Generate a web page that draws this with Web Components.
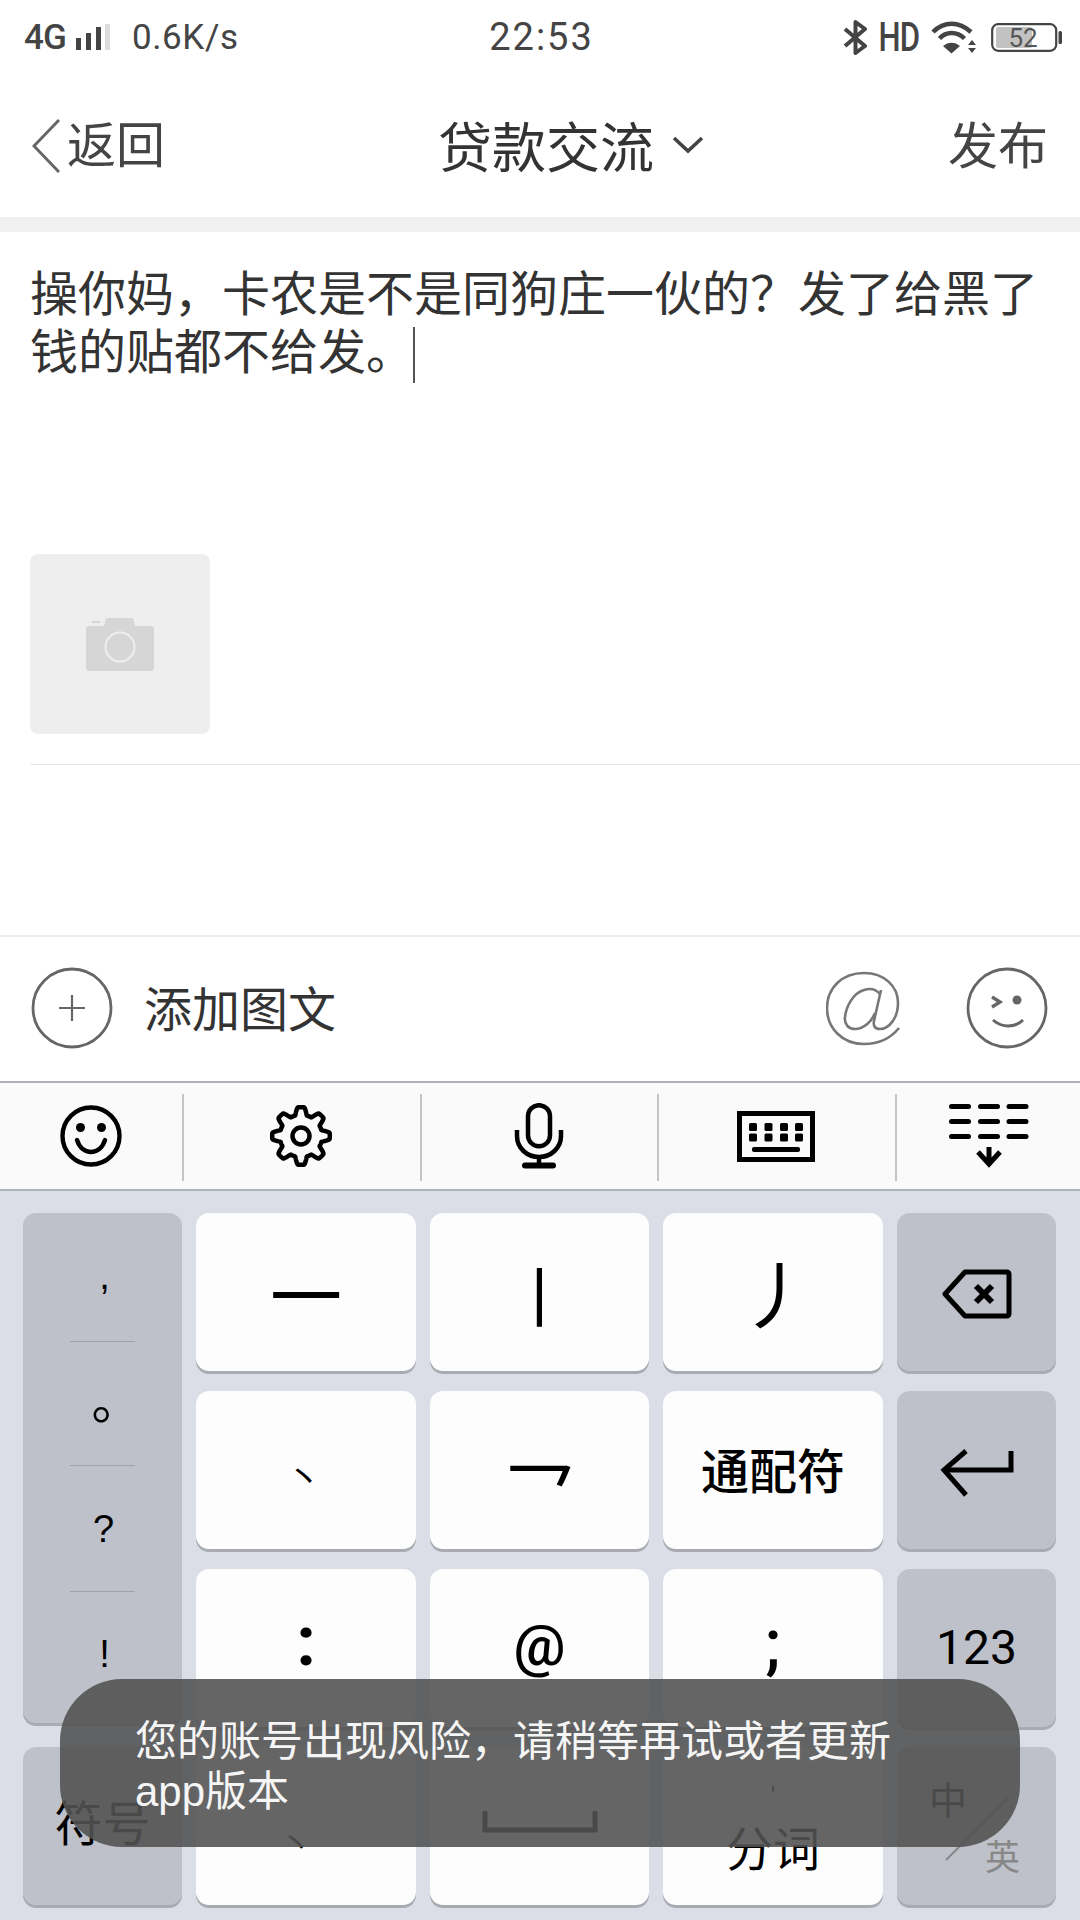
<!DOCTYPE html>
<html lang="zh">
<head>
<meta charset="utf-8">
<title>贷款交流</title>
<style>
  html, body { margin: 0; padding: 0; background: #fff; }
  body {
    width: 1080px; height: 1920px; overflow: hidden; position: relative;
    font-family: "Noto Sans CJK SC", "Noto Sans", sans-serif; color: #333;
  }
</style>
</head>
<body>
<status-bar></status-bar>
<nav-bar title="贷款交流"></nav-bar>
<post-editor>操你妈，卡农是不是同狗庄一伙的？发了给黑了钱的贴都不给发。</post-editor>
<compose-bar></compose-bar>
<ime-toolbar></ime-toolbar>
<stroke-keyboard></stroke-keyboard>
<toast-message>您的账号出现风险，请稍等再试或者更新app版本</toast-message>

<script>
// small helper, every element just sets its shadow html
function shadow(el, html) {
  el.attachShadow({ mode: 'open' }).innerHTML = html;
}

// cog outline with 8 rounded teeth
function gearPath(cx, cy) {
  let d = '';
  for (let i = 0; i <= 240; i++) {
    const a = i / 240 * Math.PI * 2 - Math.PI / 2;
    const wave = Math.max(-1, Math.min(1, Math.cos(a * 8 + Math.PI * 4) * 1.7));
    const r = 25 + 3.8 * wave;
    d += (i ? 'L' : 'M') + (cx + r * Math.cos(a)).toFixed(2) + ' ' + (cy + r * Math.sin(a)).toFixed(2);
  }
  return d + 'Z';
}

class StatusBar extends HTMLElement {
  connectedCallback() {
    shadow(this, `
      <style>
        :host { display: flex; height: 74px; align-items: center; color: #444; font-family: "Roboto", sans-serif; }
        .left { display: flex; align-items: center; padding-left: 24px; flex: 1; }
        .net { font-size: 35px; font-weight: 500; width: 52px; letter-spacing: -1px; }
        .speed { font-size: 35px; margin-left: 22px; letter-spacing: .6px; }
        .time { font-size: 38px; letter-spacing: 2px; width: 180px; text-align: center; margin-left: -3px; }
        .right { flex: 1; display: flex; align-items: center; justify-content: flex-end; padding-right: 18px; }
        .hd { font-size: 41px; font-weight: 500; margin: 0 5px 0 5px; transform: scaleX(.76); letter-spacing: -1px; }
        svg { display: block; }
      </style>
      <div class="left">
        <span class="net">4G</span>
        <svg width="34" height="26" viewBox="0 0 34 26"><rect x="0" y="14" width="5" height="12" fill="#444"/><rect x="10" y="9" width="5" height="17" fill="#444"/><rect x="20" y="3" width="5" height="23" fill="#444"/><rect x="29" y="0" width="5" height="26" fill="#ddd"/></svg>
        <span class="speed">0.6K/s</span>
      </div>
      <span class="time">22:53</span>
      <div class="right">
        <svg width="24" height="35" viewBox="0 0 24 35" fill="none" stroke="#444" stroke-width="4" stroke-linejoin="round"><path d="M2 9l20 17-9.500 7V2l9.500 7L2 26"/></svg>
        <span class="hd">HD</span>
        <svg width="46" height="33" viewBox="0 0 46 33"><path d="M2 11C13 0 28 0 40 11" fill="none" stroke="#444" stroke-width="4.500"/><path d="M8.500 17.500C15 10 26 10 33.500 17.500" fill="none" stroke="#444" stroke-width="4.500"/><path d="M12 25c5-4.500 12-4.500 17 0l-8.500 7.500z" fill="#444"/><path d="M37 24l4-5 4 5zM37 27h8l-4 5z" fill="#444"/></svg>
        <svg style="margin-left:14px" width="71" height="29" viewBox="0 0 71 29"><rect x="1.200" y="1.200" width="64" height="26.600" rx="6" fill="none" stroke="#444" stroke-width="2.200"/><rect x="5" y="4" width="36" height="21" rx="2" fill="#c2c2c2"/><rect x="67.500" y="8" width="3.500" height="13" rx="1.500" fill="#444"/><text x="32" y="23.500" font-family="Roboto, sans-serif" font-size="26" fill="#555" text-anchor="middle">52</text></svg>
      </div>`);
  }
}

class NavBar extends HTMLElement {
  connectedCallback() {
    shadow(this, `
      <style>
        :host { display: flex; height: 143px; align-items: center; padding: 0 32px; font-size: 49px; color: #444; box-sizing: border-box; }
        .back { display: flex; align-items: center; width: 406px; flex: none; }
        .back span { margin: 0 0 8px 7px; }
        .title { display: flex; align-items: center; font-size: 54px; color: #333; margin-bottom: 2px; }
        .title svg { margin: 0 0 0 18px; }
        .pub { font-size: 50px; margin-left: auto; margin-bottom: 8px; }
        svg { display: block; }
      </style>
      <div class="back">
        <svg width="28" height="54" viewBox="0 0 28 54" fill="none" stroke="#666" stroke-width="3"><path d="M27 1L2 27l25 26"/></svg>
        <span>返回</span>
      </div>
      <div class="title"><span>${this.getAttribute('title')}</span>
        <svg width="32" height="18" viewBox="0 0 32 18" fill="none" stroke="#444" stroke-width="3.600"><path d="M2 2l14 13L30 2"/></svg>
      </div>
      <span class="pub">发布</span>`);
  }
}

class PostEditor extends HTMLElement {
  connectedCallback() {
    shadow(this, `
      <style>
        :host { display: block; height: 718px; box-sizing: border-box; border-top: 15px solid #f0f0f0; }
        .text { margin: 29px 30px 0; height: 293px; font-size: 48px; line-height: 58px; color: #333; }
        .caret { display: inline-block; width: 2px; height: 56px; background: #555; vertical-align: -14px; margin-left: -1px; }
        .photo { margin-left: 30px; width: 180px; height: 180px; border-radius: 8px; background: #eee; display: flex; align-items: center; justify-content: center; }
        .line { margin: 30px 0 0 30px; height: 1px; background: #e8e8e8; }
        svg { display: block; }
      </style>
      <div class="text"><slot></slot><span class="caret"></span></div>
      <div class="photo">
        <svg width="68" height="53" viewBox="0 0 68 53"><path d="M0 11a3 3 0 0 1 3-3h15l2-8h27l2 8h16a3 3 0 0 1 3 3v39a3 3 0 0 1-3 3H3a3 3 0 0 1-3-3z" fill="#d6d6d6"/><rect x="6" y="3" width="8" height="2" fill="#d6d6d6"/><circle cx="34" cy="29" r="14.500" fill="none" stroke="#eee" stroke-width="2"/></svg>
      </div>
      <div class="line"></div>`);
  }
}

class ComposeBar extends HTMLElement {
  connectedCallback() {
    shadow(this, `
      <style>
        :host { display: flex; height: 146px; box-sizing: border-box; align-items: center; padding: 0 32px 2px 31px; font-size: 48px; color: #333; border-top: 2px solid #ececec; }
        .lbl { flex: 1; margin: 0 0 4px 31px; }
        .at { margin-right: 66px; }
        svg { display: block; }
      </style>
      <svg width="82" height="82" viewBox="0 0 82 82" fill="none" stroke="#666" stroke-width="2.800"><circle cx="41" cy="41" r="39"/><path d="M41 28v26M28 41h26" stroke-width="2.200"/></svg>
      <span class="lbl">添加图文</span>
      <svg class="at" width="74" height="75" viewBox="0 0 74 75" fill="none" stroke="#777" stroke-width="2.600"><path d="M73 57C64 68 52 73 38 73C16 73 1 57 1 37C1 17 16 2 38 2C58 2 72 15 72 32C72 47 63 58 54 58C49 58 47 55 48 50L55 19"/><path d="M54 23C50 18 44 17 38 19C27 22 20 36 19 46C18 54 23 58 29 58C38 58 46 50 49 42"/></svg>
      <svg width="82" height="82" viewBox="0 0 82 82" fill="none" stroke="#666" stroke-width="2.800"><circle cx="41" cy="41" r="39"/><path d="M26 30l8 5-8 5" stroke-width="3.400"/><circle cx="51" cy="33" r="4.500" fill="#666" stroke="none"/><path d="M27 53c9 8 22 8 30 0" stroke-width="3"/></svg>`);
  }
}

class ImeToolbar extends HTMLElement {
  connectedCallback() {
    shadow(this, `
      <style>
        :host { display: grid; grid-template-columns: 182px 238px 237px 238px 185px; height: 110px; box-sizing: border-box; background: #fafafa; border-top: 2px solid #adb1ba; border-bottom: 2px solid #adb1ba; }
        .cell { display: flex; align-items: center; justify-content: center; position: relative; }
        .cell + .cell::before { content: ""; position: absolute; left: 0; top: 11px; bottom: 8px; width: 2px; background: #c4c4c4; }
        svg { display: block; }
      </style>
      <div class="cell">
        <svg width="62" height="62" viewBox="0 0 62 62" fill="none" stroke="#000" stroke-width="4.400"><circle cx="31" cy="31" r="28.500"/><circle cx="20.500" cy="22.500" r="4.500" fill="#000" stroke="none"/><circle cx="41.500" cy="22.500" r="4.500" fill="#000" stroke="none"/><path d="M17 35c5 16 23 16 28 0" stroke-linecap="round"/></svg>
      </div>
      <div class="cell">
        <svg width="64" height="64" viewBox="0 0 64 64" fill="none" stroke="#000" stroke-width="4.500"><path d="${gearPath(32, 32)}" stroke-linejoin="round"/><circle cx="32" cy="32" r="8.500"/></svg>
      </div>
      <div class="cell">
        <svg width="50" height="66" viewBox="0 0 50 66" fill="none" stroke="#000" stroke-width="4.500"><rect x="14" y="2.200" width="22" height="41" rx="11"/><path d="M3 27v6c0 12 10 21 22 21s22-9 22-21v-6"/><path d="M25 54v7"/><rect x="8" y="59.500" width="34" height="6" rx="3" fill="#000" stroke="none"/></svg>
      </div>
      <div class="cell">
        <svg width="78" height="51" viewBox="0 0 78 51"><rect x="2.500" y="2.500" width="73" height="46" fill="none" stroke="#000" stroke-width="5"/><g fill="#000"><rect x="12" y="12" width="8" height="8" rx="1.500"/><rect x="27.500" y="12" width="8" height="8" rx="1.500"/><rect x="43" y="12" width="8" height="8" rx="1.500"/><rect x="58" y="12" width="8" height="8" rx="1.500"/><rect x="12" y="22.500" width="8" height="8" rx="1.500"/><rect x="27.500" y="22.500" width="8" height="8" rx="1.500"/><rect x="43" y="22.500" width="8" height="8" rx="1.500"/><rect x="58" y="22.500" width="8" height="8" rx="1.500"/><rect x="15" y="36" width="48" height="5" rx="2"/></g></svg>
      </div>
      <div class="cell" style="padding-left:2px">
        <svg width="80" height="64" viewBox="0 0 80 64"><g fill="#000"><rect x="0" y="0" width="22" height="5" rx="2.500"/><rect x="29" y="0" width="22" height="5" rx="2.500"/><rect x="57.500" y="0" width="22" height="5" rx="2.500"/><rect x="0" y="15" width="22" height="5" rx="2.500"/><rect x="29" y="15" width="22" height="5" rx="2.500"/><rect x="57.500" y="15" width="22" height="5" rx="2.500"/><rect x="0" y="30" width="22" height="5" rx="2.500"/><rect x="29" y="30" width="22" height="5" rx="2.500"/><rect x="57.500" y="30" width="22" height="5" rx="2.500"/></g><path d="M40 43v17M29 48l11 12 11-12" fill="none" stroke="#000" stroke-width="5"/></svg>
      </div>`);
  }
}

class KeyCap extends HTMLElement {
  connectedCallback() {
    shadow(this, `
      <style>
        :host { display: flex; align-items: center; justify-content: center; position: relative; background: #fdfdfd; border-radius: 13px; box-shadow: 0 3px 0 #a8abb2; color: #000; font-size: 46px; overflow: hidden; }
        :host([fn]) { background: #bec1ca; }
      </style>
      <slot></slot>`);
  }
}

class StrokeKeyboard extends HTMLElement {
  connectedCallback() {
    shadow(this, `
      <style>
        :host { display: grid; grid-template-columns: 159px 220px 219px 220px 159px; grid-template-rows: repeat(4, 158px); column-gap: 14px; row-gap: 20px; height: 729px; box-sizing: border-box; padding: 22px 24px 0 23px; background: #dbdee6; }
        .punct { grid-row: 1 / span 3; margin-bottom: 4px; display: grid; grid-template-rows: 128px 124px 126px 1fr; align-items: stretch; justify-content: stretch; }
        .punct div { display: flex; align-items: center; justify-content: center; position: relative; font-size: 38px; font-family: "Liberation Sans", sans-serif; }
        .punct div + div::before { content: ""; position: absolute; top: 0; left: 47px; width: 65px; height: 1px; background: #9ea1aa; }
        .g { display: block; line-height: 1; }
        .rm { font-family: "Roboto", sans-serif; }
        .low { color: #888; }
        svg { display: block; }
      </style>
      <key-cap fn class="punct">
        <div><span class="g" style="transform:translate(2px,-1px)">,</span></div>
        <div><span class="g" style="font-family:'Noto Sans CJK SC',sans-serif;font-size:50px;transform:translate(14px,-6px)">。</span></div>
        <div><span class="g" style="transform:translate(1px,1px)">?</span></div>
        <div><span class="g" style="transform:translate(2px,-3px)">!</span></div>
      </key-cap>
      <key-cap><span class="g" style="font-size:72px">一</span></key-cap>
      <key-cap><span class="g" style="font-size:64px;transform:translateY(1px)">丨</span></key-cap>
      <key-cap><span class="g" style="font-size:74px;transform:translate(3px,-1px)">丿</span></key-cap>
      <key-cap fn>
        <svg style="transform:translateY(2px)" width="70" height="50" viewBox="0 0 70 50" fill="none" stroke="#000" stroke-width="5" stroke-linejoin="round"><path d="M23 3h42a2 2 0 0 1 2 2v40a2 2 0 0 1-2 2H23L3 25z"/><path d="M34 17l16 16M50 17L34 33" stroke-width="6"/></svg>
      </key-cap>
      <key-cap><span class="g" style="font-size:36px;transform:translate(-2px,5px)">丶</span></key-cap>
      <key-cap><span class="g" style="font-size:72px;transform:translateY(20px)">乛</span></key-cap>
      <key-cap><span class="g" style="font-size:48px;font-weight:500;transform:translateY(-2px)">通配符</span></key-cap>
      <key-cap fn>
        <svg style="transform:translateY(3px)" width="74" height="48" viewBox="0 0 74 48" fill="none" stroke="#000" stroke-width="5"><path d="M71 2v19H4"/><path d="M26 2L4 21l22 25"/></svg>
      </key-cap>
      <key-cap><span class="g rm" style="font-size:70px;font-weight:700;transform:translateY(-7px)">:</span></key-cap>
      <key-cap><span class="g rm" style="font-size:58px;font-weight:500;transform:translateY(-3px)">@</span></key-cap>
      <key-cap><span class="g rm" style="font-size:66px;font-weight:500;transform:translateY(-4px)">;</span></key-cap>
      <key-cap fn><span class="g rm" style="font-size:48px">123</span></key-cap>
      <key-cap fn><span class="g" style="font-size:48px;transform:translateY(-6px)">符号</span></key-cap>
      <key-cap><span class="g" style="font-size:34px;transform:translate(-10px,16px)">丶</span></key-cap>
      <key-cap>
        <svg style="transform:translateY(-4px)" width="116" height="22" viewBox="0 0 116 22" fill="none" stroke="#000" stroke-width="5"><path d="M3 0v19h110V0"/></svg>
      </key-cap>
      <key-cap style="flex-direction:column">
        <span class="g rm" style="font-size:24px;line-height:18px;margin-top:4px">'</span>
        <span class="g" style="font-size:47px;margin-top:17px">分词</span>
      </key-cap>
      <key-cap fn>
        <span class="g" style="position:absolute;left:32px;top:32px;font-size:38px;color:#000">中</span>
        <svg style="position:absolute;left:48px;top:50px" width="64" height="64" viewBox="0 0 64 64"><path d="M1 63L63 1" stroke="#888" stroke-width="2"/></svg>
        <span class="g low" style="position:absolute;left:88px;top:90px;font-size:35px">英</span>
      </key-cap>`);
  }
}

class ToastMessage extends HTMLElement {
  connectedCallback() {
    shadow(this, `
      <style>
        :host { display: flex; align-items: center; position: absolute; left: 60px; top: 1679px; width: 960px; height: 168px; box-sizing: border-box; padding: 8px 125px 0 75px; border-radius: 62px; background: rgba(82,82,82,.89); color: #f5f5f5; font-family: "Liberation Sans", "Noto Sans CJK SC", sans-serif; font-size: 42px; line-height: 50px; }
      </style>
      <div><slot></slot></div>`);
  }
}

customElements.define('status-bar', StatusBar);
customElements.define('nav-bar', NavBar);
customElements.define('post-editor', PostEditor);
customElements.define('compose-bar', ComposeBar);
customElements.define('ime-toolbar', ImeToolbar);
customElements.define('key-cap', KeyCap);
customElements.define('stroke-keyboard', StrokeKeyboard);
customElements.define('toast-message', ToastMessage);
</script>
</body>
</html>
